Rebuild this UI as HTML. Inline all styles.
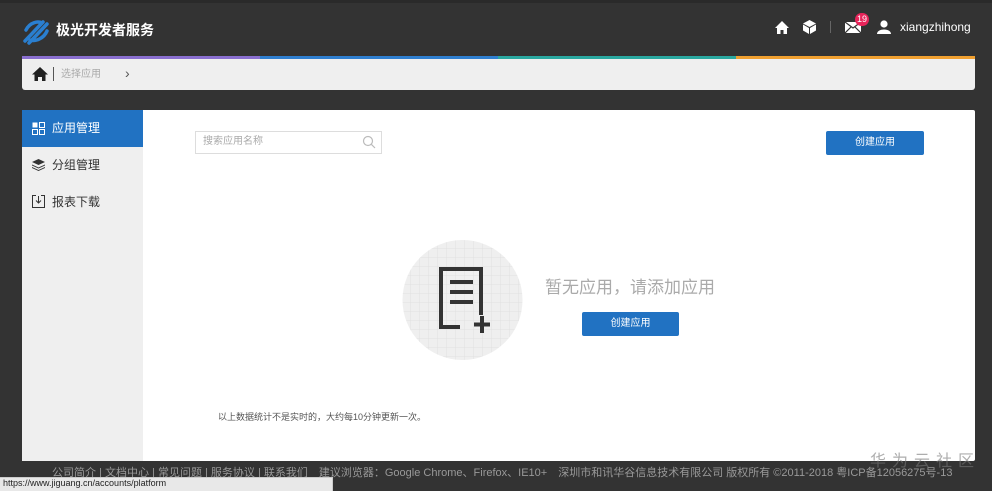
<!DOCTYPE html>
<html><head><meta charset="utf-8"><style>
*{margin:0;padding:0;box-sizing:border-box}
body{width:992px;height:491px;background:#333;font-family:"Liberation Sans","Noto Sans CJK SC",sans-serif;position:relative;overflow:hidden}
.abs{position:absolute;line-height:1.2}
</style></head><body>
<div class="abs" style="left:0;top:0;width:992px;height:3px;background:#2a2a2a"></div>
<svg class="abs" style="left:22px;top:18px" width="28" height="27" viewBox="0 0 28 27">
<path d="M4 12 C8 4 16 3 20 5 M3 23 L21 4 M7 25 L25 6 M8 22 C14 24 22 20 25 13" stroke="#2a7fd0" stroke-width="3.5" stroke-linecap="round" fill="none"/></svg>
<div class="abs" style="left:56px;top:22px;color:#fff;font-size:14px;font-weight:bold">极光开发者服务</div>
<svg class="abs" style="left:775px;top:21px" width="14" height="13" viewBox="0 0 14 13"><path d="M7 0 L14 7 H12 V13 H8.5 V9 H5.5 V13 H2 V7 H0Z" fill="#fff"/></svg>
<svg class="abs" style="left:803px;top:20px" width="13" height="14" viewBox="0 0 13 14"><path d="M6.5 0 L13 3.5 L6.5 7 L0 3.5Z M0 4.5 L6 8 V14 L0 10.5Z M7 8 L13 4.5 V10.5 L7 14Z" fill="#fff"/></svg>
<div class="abs" style="left:830px;top:21px;width:1px;height:12px;background:#666"></div>
<svg class="abs" style="left:845px;top:22px" width="16" height="11" viewBox="0 0 16 11"><rect width="16" height="11" fill="#fff"/><path d="M0 0 L8 6 L16 0 M0 11 L6 5 M16 11 L10 5" stroke="#333" stroke-width="1.2" fill="none"/></svg>
<div class="abs" style="left:855px;top:13px;width:14px;height:13px;border-radius:7px;background:#e8245a;color:#fff;font-size:9px;text-align:center;line-height:13px">19</div>
<svg class="abs" style="left:877px;top:20px" width="14" height="14" viewBox="0 0 14 14"><circle cx="7" cy="4" r="3.6" fill="#fff"/><path d="M0 14 C0 8 14 8 14 14Z" fill="#fff"/></svg>
<div class="abs" style="left:900px;top:20px;color:#fff;font-size:12px">xiangzhihong</div>
<div class="abs" style="left:22px;top:56px;width:238px;height:3px;background:#8a6fd0"></div>
<div class="abs" style="left:260px;top:56px;width:238px;height:3px;background:#2f7fd0"></div>
<div class="abs" style="left:498px;top:56px;width:238px;height:3px;background:#2aa8a0"></div>
<div class="abs" style="left:736px;top:56px;width:239px;height:3px;background:#f0a030"></div>
<div class="abs" style="left:22px;top:59px;width:953px;height:31px;background:#efefef;border-radius:0 0 3px 3px"></div>
<svg class="abs" style="left:32px;top:67px" width="16" height="14" viewBox="0 0 16 14"><path d="M8 0 L16 7.5 H13.5 V14 H10 V10 H6 V14 H2.5 V7.5 H0Z" fill="#222"/></svg>
<div class="abs" style="left:53px;top:67px;width:1px;height:14px;background:#555"></div>
<div class="abs" style="left:61px;top:69px;color:#aaa;font-size:10px">选择应用</div>
<div class="abs" style="left:125px;top:65px;color:#555;font-size:14px">›</div>
<div class="abs" style="left:22px;top:110px;width:953px;height:351px;background:#fff;border-radius:2px"></div>
<div class="abs" style="left:22px;top:110px;width:121px;height:351px;background:#efefef"></div>
<div class="abs" style="left:22px;top:110px;width:121px;height:37px;background:#2172c2"></div>
<svg class="abs" style="left:32px;top:122px" width="13" height="13" viewBox="0 0 13 13"><rect x="0.5" y="0.5" width="5" height="5" fill="#fff"/><rect x="7.5" y="0.5" width="5" height="5" fill="none" stroke="#fff"/><rect x="0.5" y="7.5" width="5" height="5" fill="none" stroke="#fff"/><rect x="7.5" y="7.5" width="5" height="5" fill="none" stroke="#fff"/></svg>
<div class="abs" style="left:52px;top:121px;color:#fff;font-size:12px">应用管理</div>
<svg class="abs" style="left:32px;top:159px" width="13" height="12" viewBox="0 0 13 12"><path d="M6.5 0 L13 3 L6.5 6 L0 3Z M0 5.5 L6.5 8.5 L13 5.5 V6.5 L6.5 9.5 L0 6.5Z M0 8 L6.5 11 L13 8 V9 L6.5 12 L0 9Z" fill="#333"/></svg>
<div class="abs" style="left:52px;top:158px;color:#333;font-size:12px">分组管理</div>
<svg class="abs" style="left:32px;top:195px" width="13" height="13" viewBox="0 0 13 13"><path d="M4 0.5 H0.5 V12.5 H12.5 V0.5 H9 M6.5 1 V8 M4 5.5 L6.5 8 L9 5.5" stroke="#333" fill="none"/></svg>
<div class="abs" style="left:52px;top:195px;color:#333;font-size:12px">报表下载</div>
<div class="abs" style="left:195px;top:131px;width:187px;height:23px;border:1px solid #ddd"></div>
<div class="abs" style="left:203px;top:136px;color:#aaa;font-size:10px">搜索应用名称</div>
<svg class="abs" style="left:362px;top:135px" width="14" height="14" viewBox="0 0 14 14"><circle cx="6" cy="6" r="4.5" stroke="#bbb" fill="none" stroke-width="1.2"/><path d="M9.3 9.3 L13 13" stroke="#bbb" stroke-width="1.2"/></svg>
<div class="abs" style="left:826px;top:131px;width:98px;height:24px;background:#2172c2;border-radius:2px;color:#fff;font-size:10px;text-align:center;line-height:24px">创建应用</div>
<svg class="abs" style="left:402px;top:240px" width="121" height="120" viewBox="0 0 121 120">
<defs><pattern id="g" width="9" height="9" patternUnits="userSpaceOnUse"><path d="M9 0 V9 H0" stroke="#ddd" fill="none" stroke-width="0.7"/></pattern><clipPath id="c"><circle cx="60.5" cy="60" r="60"/></clipPath></defs>
<circle cx="60.5" cy="60" r="60" fill="#efefef"/>
<rect width="121" height="120" fill="url(#g)" clip-path="url(#c)"/>
<path d="M58 87 H39 V29 H79 V75" stroke="#333" stroke-width="4" fill="none"/>
<path d="M48 42 H71 M48 52 H71 M48 62 H71" stroke="#333" stroke-width="4"/>
<path d="M80 76 V93 M72 84.5 H88" stroke="#333" stroke-width="4"/>
</svg>
<div class="abs" style="left:545px;top:278px;color:#aaa;font-size:17px">暂无应用，请添加应用</div>
<div class="abs" style="left:582px;top:312px;width:97px;height:24px;background:#2172c2;border-radius:2px;color:#fff;font-size:10px;text-align:center;line-height:24px">创建应用</div>
<div class="abs" style="left:218px;top:412px;color:#555;font-size:9px">以上数据统计不是实时的，大约每10分钟更新一次。</div>
<div class="abs" style="left:52px;top:467px;color:#999;font-size:11px;white-space:nowrap">公司简介 | 文档中心 | 常见问题 | 服务协议 | 联系我们　建议浏览器：Google Chrome、Firefox、IE10+　深圳市和讯华谷信息技术有限公司 版权所有 ©2011-2018 粤ICP备12056275号-13</div>
<div class="abs" style="left:870px;top:452px;color:#777;font-size:16px;letter-spacing:6px;opacity:.6">华为云社区</div>
<div class="abs" style="left:0;top:477px;width:333px;height:14px;background:#e8e8e8;border-top:1px solid #ccc;border-right:1px solid #ccc"></div>
<div class="abs" style="left:3px;top:478px;color:#222;font-size:9px">https://www.jiguang.cn/accounts/platform</div>
</body></html>
